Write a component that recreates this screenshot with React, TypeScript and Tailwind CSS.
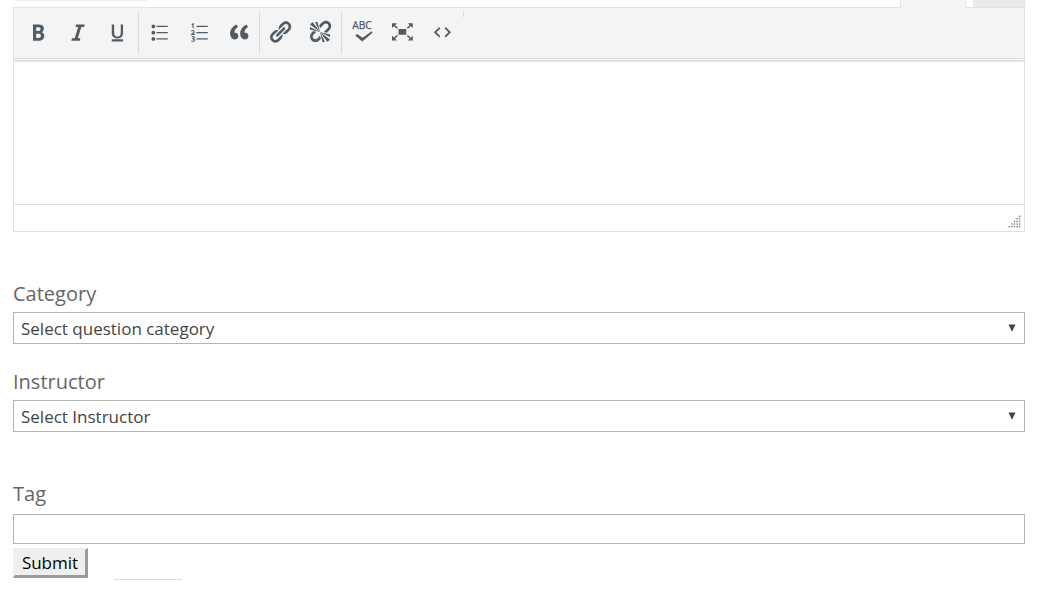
import type { ReactNode } from "react";

type Tool = { label: string; icon: ReactNode };

const bold = <path d="M6 4v13h4.540c1.370 0 2.460-.33 3.260-1 .8-.66 1.200-1.580 1.200-2.770 0-.84-.17-1.510-.51-2.010s-.9-.85-1.670-1.030v-.09c.57-.1 1.020-.4 1.360-.9s.51-1.130.51-1.910c0-1.140-.39-1.980-1.170-2.500C12.750 4.260 11.500 4 9.780 4H6zm2.570 5.150V6.260h1.360c.73 0 1.270.11 1.610.32.34.22.51.58.51 1.070 0 .54-.16.92-.47 1.150s-.82.35-1.510.35h-1.500zm0 2.190h1.600c1.440 0 2.160.53 2.160 1.610 0 .6-.17 1.050-.51 1.340s-.86.43-1.570.43H8.570v-3.380z" />;
const italic = <path d="M14.780 6h-2.130l-2.800 9h2.120l-.62 2H4.600l.62-2h2.140l2.800-9H8.030l.62-2h6.750z" />;
const underline = <path d="M14 4h-1.800v6.710c0 1.990-1.220 2.980-2.650 2.980-1.420 0-2.650-1-2.650-2.960V4H5v6.870c0 1.910 1 4.240 4.480 4.240 3.490 0 4.520-2.280 4.520-4.200V4zm0 13.600v-1.800H5v1.800h9z" />;
const bullets = <path d="M5.500 7C4.670 7 4 6.330 4 5.500 4 4.680 4.670 4 5.500 4 6.320 4 7 4.680 7 5.500 7 6.330 6.320 7 5.500 7zM8 5h9v1H8V5zm-2.500 7c-.83 0-1.500-.67-1.500-1.500C4 9.680 4.670 9 5.500 9c.82 0 1.500.68 1.500 1.500 0 .83-.68 1.500-1.500 1.500zM8 10h9v1H8v-1zm-2.500 7c-.83 0-1.500-.67-1.500-1.500 0-.82.67-1.500 1.500-1.500.82 0 1.500.68 1.500 1.500 0 .83-.68 1.500-1.500 1.500zM8 15h9v1H8v-1z" />;
const numbers = (
  <>
    <path d="M8 5h9v1H8zM8 10h9v1H8zM8 15h9v1H8z" />
    <path
      fill="none"
      stroke="currentColor"
      strokeWidth="0.9"
      d="M4.200 4.200l1.100-.7v3.500M3.900 9.300c.3-.6 2.200-.8 2.200.4 0 .8-1.300 1.400-2 2.200h2.500M4 13.900c.6-.4 2.200-.4 2.200.5 0 .7-.8.9-1.500.9.8 0 1.700.2 1.700 1.100 0 1.200-1.800 1.200-2.500.7"
    />
  </>
);
const quote = <path d="M9.490 13.220c0-.74-.2-1.380-.61-1.900-.62-.78-1.830-.88-2.530-.72-.29-1.650 1.110-3.750 2.920-4.650L7.880 4c-2.730 1.300-5.420 4.280-4.960 8.050C3.210 14.430 4.590 16 6.540 16c.85 0 1.560-.25 2.120-.75s.83-1.180.83-2.030zm8.050 0c0-.74-.2-1.380-.61-1.900-.63-.78-1.830-.88-2.530-.72-.29-1.650 1.110-3.750 2.920-4.650L15.930 4c-2.730 1.300-5.410 4.280-4.950 8.050.29 2.380 1.660 3.950 3.610 3.950.85 0 1.560-.25 2.120-.75s.83-1.180.83-2.030z" />;
const link = <path d="M17.740 2.760c1.680 1.690 1.680 4.410 0 6.100l-1.530 1.520c-1.120 1.120-2.700 1.470-4.140 1.090l2.620-2.610.76-.77.76-.76c.84-.84.84-2.200 0-3.040-.84-.85-2.200-.85-3.040 0l-.77.76-3.380 3.380c-.37-1.440-.02-3.020 1.100-4.140l1.520-1.530c1.690-1.680 4.420-1.680 6.100 0zM8.590 13.430l5.340-5.340c.42-.42.42-1.100 0-1.520-.44-.43-1.130-.39-1.530 0l-5.330 5.340c-.42.42-.42 1.100 0 1.520.44.43 1.130.39 1.520 0zm-.76 2.290l4.140-4.150c.38 1.440.03 3.020-1.090 4.140l-1.520 1.530c-1.690 1.680-4.410 1.680-6.100 0-1.680-1.680-1.680-4.420 0-6.100l1.530-1.520c1.120-1.120 2.700-1.470 4.140-1.100l-4.140 4.150c-.85.84-.85 2.200 0 3.050.84.84 2.200.84 3.040 0z" />;
const unlink = <path d="M17.740 2.260c1.680 1.690 1.680 4.410 0 6.100l-1.530 1.520c-.32.33-.69.58-1.080.77L13 10l1.690-1.640.76-.77.76-.76c.84-.84.84-2.200 0-3.040-.84-.85-2.200-.85-3.040 0l-.77.76-.76.76L10 7l-.65-2.140c.19-.38.44-.75.77-1.070l1.520-1.530c1.690-1.680 4.420-1.680 6.100 0zM2 4l8 6-6-8zm4-2l4 8-2-8H6zM2 6l8 4-8-2V6zm7.360 7.690L10 13l.74 2.350-1.380 1.390c-1.690 1.680-4.410 1.680-6.100 0-1.680-1.680-1.680-4.420 0-6.100l1.390-1.380L7 10l-.69.64-1.520 1.530c-.85.84-.85 2.200 0 3.040.84.85 2.200.85 3.040 0zM18 16l-8-6 6 8zm-4 2l-4-8 2 8h2zm4-4l-8-4 8 2v2z" />;
const spelling = (
  <>
    <text x="10" y="7.6" fontSize="8.2" textAnchor="middle" stroke="currentColor" strokeWidth="0.2">ABC</text>
    <path d="M4.6 12.800l1.400-1.300 4.400 3 7.400-5.200.6 1.200-8.200 7z" />
  </>
);
const fullscreen = (
  <>
    <path d="M7.200 7.600h6.200v4.600H7.200zM2 3h4L2 6.800zM18.600 3h-4l4 3.800zM2 16.800h4L2 13zM18.600 16.800h-4l4-3.800z" />
    <path fill="none" stroke="currentColor" strokeWidth="1.300" d="M3 4l3.300 3M17.600 4l-3.300 3M3 15.800l3.300-3M17.600 15.800l-3.300-3" />
  </>
);
const code = <path d="M8.600 7.200l-3.100 3 3.100 2.900-.8 1.300-4.300-4.200 4.300-4.200zM12.100 13.100l3.100-2.900-3.100-3 .8-1.200 4.300 4.200-4.300 4.200z" />;

const groups: Tool[][] = [
  [
    { label: "Bold", icon: bold },
    { label: "Italic", icon: italic },
    { label: "Underline", icon: underline },
  ],
  [
    { label: "Bulleted list", icon: bullets },
    { label: "Numbered list", icon: numbers },
    { label: "Blockquote", icon: quote },
  ],
  [
    { label: "Insert link", icon: link },
    { label: "Remove link", icon: unlink },
  ],
  [
    { label: "Check spelling", icon: spelling },
    { label: "Fullscreen", icon: fullscreen },
    { label: "Source code", icon: code },
  ],
];

function ToolButton({ label, icon }: Tool) {
  return (
    <button type="button" aria-label={label} className="flex h-10 w-10 items-center justify-center text-[#505b64]">
      <svg viewBox="-0.4 -0.4 20.8 20.8" className="h-[26px] w-[26px]" fill="currentColor" aria-hidden="true">
        {icon}
      </svg>
    </button>
  );
}

function ResizeGrip() {
  return (
    <svg width="13" height="13" viewBox="0 0 13 13" aria-hidden="true">
      {[0, 1, 2, 3, 4].flatMap((row) =>
        Array.from({ length: row + 1 }, (_, i) => (
          <rect key={`${row}-${i}`} x={10.9 - i * 2.6} y={row * 2.6 + 0.6} width="1.5" height="1.3" fill="#837c86" />
        )),
      )}
    </svg>
  );
}

function Editor() {
  return (
    <section aria-label="Question editor">
      <div className="flex h-[7px] justify-between">
        <div className="ml-[3px] h-px w-[132px] bg-[#eeeeee]" />
        <div className="flex gap-[7px]">
          <div className="-mb-px w-[66px] border-x border-[#e5e5e5] bg-[#f4f4f4]" />
          <div className="w-[52px] border-r border-[#e5e5e5] bg-[#e9e9e9]" />
        </div>
      </div>
      <div className="border border-[#e1e1e1]">
        <div role="toolbar" aria-label="Formatting" className="flex h-[51px] border-b border-[#dcdcdc] bg-[#f4f4f4] px-1 py-1">
          {groups.map((group, index) => (
            <div
              key={group[0].label}
              className={index < 2 ? "flex h-[42px] border-r border-[#d9d9d9]" : index === 2 ? "flex h-[42px] border-r border-[#d9d9d9] pr-px" : "flex h-[42px] pr-px"}
            >
              {group.map((tool) => (
                <ToolButton key={tool.label} {...tool} />
              ))}
            </div>
          ))}
          <div className="h-[5px] w-px bg-[#d9d9d9]" />
        </div>
        <div className="mt-px h-px bg-[#d9d9d9] shadow-[0_1px_2px_rgba(0,0,0,0.15)]" />
        <textarea aria-label="Question" className="block h-[143px] w-full resize-none px-2 py-2 text-[17px] outline-none" />
        <div className="flex h-[27px] items-end justify-end border-t border-[#e1e1e1] pr-[3px] pb-[3px]">
          <ResizeGrip />
        </div>
      </div>
    </section>
  );
}

function SelectField({ id, label, placeholder }: { id: string; label: string; placeholder: string }) {
  return (
    <div>
      <label htmlFor={id} className="block text-[20px] leading-7 text-[#666666]">
        {label}
      </label>
      <div className="relative mt-1">
        <select id={id} className="block h-8 w-full appearance-none border border-[#b5b5b5] bg-white px-[7px] pt-[2px] text-[17px] text-[#444444]">
          <option>{placeholder}</option>
        </select>
        <svg className="pointer-events-none absolute top-3 right-[9px] h-2 w-2" viewBox="0 0 8 8" aria-hidden="true">
          <path d="M0.500 0.500h7L4 7.700z" fill="#444444" />
        </svg>
      </div>
    </div>
  );
}

export default function App() {
  return (
    <main className="min-h-screen bg-white pr-[26px] pl-[13px] font-['Open_Sans',sans-serif]">
      <Editor />
      <form onSubmit={(event) => event.preventDefault()}>
        <div className="mt-12 flex flex-col gap-6">
          <SelectField id="category" label="Category" placeholder="Select question category" />
          <SelectField id="instructor" label="Instructor" placeholder="Select Instructor" />
        </div>
        <label htmlFor="tag" className="mt-12 block text-[20px] leading-7 text-[#666666]">
          Tag
        </label>
        <input id="tag" type="text" className="mt-[6px] block h-[30px] w-full border border-[#b5b5b5] px-2 text-[17px] text-[#444444]" />
        <div className="mt-1 flex items-start gap-[26px]">
          <button
            type="submit"
            className="h-[30px] w-[75px] border-t-2 border-r-3 border-b-3 border-l-2 border-t-[#efefef] border-r-[#9b9b9b] border-b-[#9b9b9b] border-l-[#efefef] bg-[#efefef] text-[17px] leading-6 text-black"
          >
            Submit
          </button>
          <div className="mt-[31px] h-px w-[68px] bg-[#dddddd]" />
        </div>
      </form>
    </main>
  );
}
